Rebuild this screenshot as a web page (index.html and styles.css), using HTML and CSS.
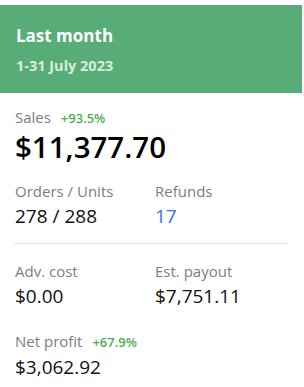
FILE: index.html
```html
<!DOCTYPE html>
<html lang="en">
<head>
    <meta charset="UTF-8">
    <meta name="viewport" content="width=device-width, initial-scale=1.0">
    <title>Last month</title>
    <link rel="stylesheet" href="styles.css">
</head>
<body>
    <div class="card">
        <header class="card-header">
            <h1 class="period-title">Last month</h1>
            <div class="period-dates">1-31 July 2023</div>
        </header>
        <main class="card-body">
            <div class="metric">
                <div class="label">Sales <span class="change">+93.5%</span></div>
                <div class="value value-big">$11,377.70</div>
            </div>
            <div class="metric-row">
                <div class="metric">
                    <div class="label">Orders / Units</div>
                    <div class="value">278 / 288</div>
                </div>
                <div class="metric">
                    <div class="label">Refunds</div>
                    <div class="value value-link">17</div>
                </div>
            </div>
            <hr class="divider">
            <div class="metric-row">
                <div class="metric">
                    <div class="label">Adv. cost</div>
                    <div class="value">$0.00</div>
                </div>
                <div class="metric">
                    <div class="label">Est. payout</div>
                    <div class="value">$7,751.11</div>
                </div>
            </div>
            <div class="metric metric-last">
                <div class="label">Net profit <span class="change">+67.9%</span></div>
                <div class="value">$3,062.92</div>
            </div>
        </main>
    </div>
</body>
</html>
```

FILE: styles.css
```css
body {
    margin: 0;
    padding-top: 5px;
    font-family: "Open Sans", Arial, sans-serif;
    background: #fff;
    color: #111;
}
.card {
    width: 302px;
    background: #fff;
}
.card-header {
    background-color: #57ac78;
    padding: 19px 16px 17px;
}
.period-title {
    margin: 0;
    font-size: 17px;
    line-height: 24px;
    font-weight: 700;
    color: #fff;
}
.period-dates {
    margin-top: 8px;
    font-size: 14.5px;
    line-height: 20px;
    font-weight: 700;
    color: #d9ecdc;
}
.card-body {
    padding: 14px 14px 0 15px;
}
.label {
    font-size: 15px;
    line-height: 20px;
    color: #7d7d7d;
}
.change {
    margin-left: 6px;
    font-size: 13px;
    font-weight: 600;
    color: #4caf50;
}
.value {
    margin-top: 2px;
    font-size: 19px;
    line-height: 26px;
    color: #111;
}
.value-big {
    margin-top: 2px;
    font-size: 29.5px;
    line-height: 34px;
    font-weight: 600;
    color: #000;
}
.value-link {
    color: #2f6ff3;
}
.metric-row {
    display: grid;
    grid-template-columns: 140px 1fr;
    margin-top: 17px;
}
.metric-row + .metric-row {
    margin-top: 15px;
}
.divider {
    margin: 14px 0 0 -1px;
    border: none;
    border-top: 1px solid #e3e3e3;
}
.metric-last {
    margin-top: 22px;
}
```
